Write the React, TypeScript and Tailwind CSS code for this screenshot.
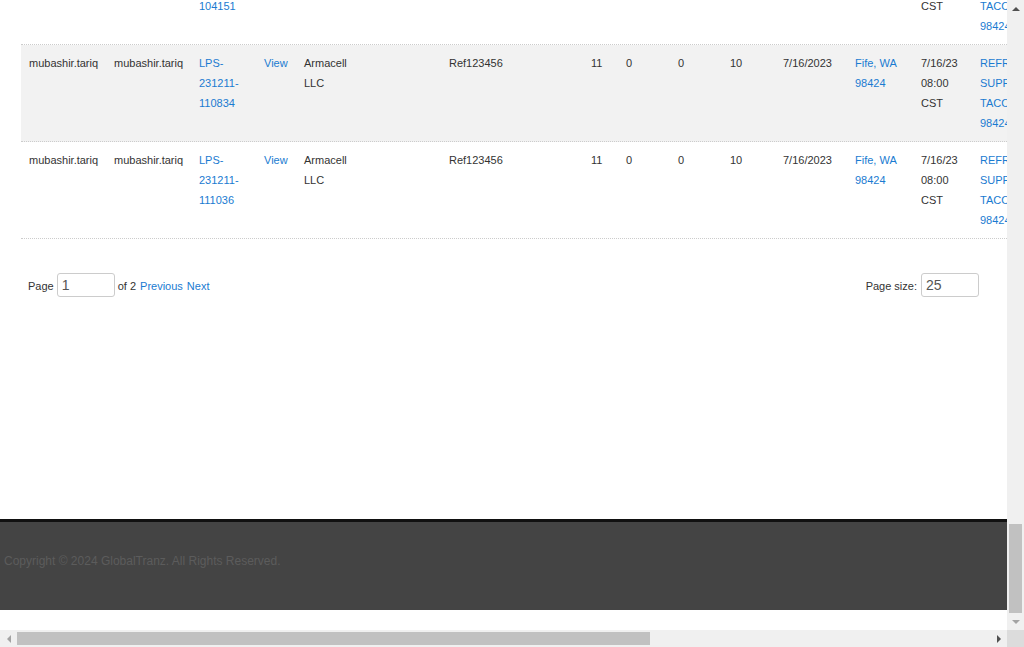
import React from 'react';

type Cell = { lines: string[]; link?: boolean };

const widths = [85, 85, 65, 40, 145, 142, 35, 52, 52, 53, 72, 66, 59, 90];

const makeRow = (id: string): Cell[] => [
  { lines: ['mubashir.tariq'] },
  { lines: ['mubashir.tariq'] },
  { lines: ['LPS-', '231211-', id], link: true },
  { lines: ['View'], link: true },
  { lines: ['Armacell', 'LLC'] },
  { lines: ['Ref123456'] },
  { lines: ['11'] },
  { lines: ['0'] },
  { lines: ['0'] },
  { lines: ['10'] },
  { lines: ['7/16/2023'] },
  { lines: ['Fife, WA', '98424'], link: true },
  { lines: ['7/16/23', '08:00', 'CST'] },
  { lines: ['REFRIGERATED', 'SUPPLY', 'TACOMA, WA', '98424'], link: true },
];

const Row = ({ cells, shaded }: { cells: Cell[]; shaded?: boolean }) => (
  <div
    className={`flex shrink-0 w-[1100px] border-b border-dotted border-[#cccccc] ${
      shaded ? 'bg-[#f2f2f2]' : 'bg-white'
    }`}
  >
    {cells.map((c, i) => (
      <div
        key={i}
        style={{ width: widths[i] }}
        className="shrink-0 px-2 pt-2 pb-2 min-h-[96px] overflow-hidden"
      >
        {c.lines.map((l, j) => (
          <div
            key={j}
            className={`h-5 leading-5 whitespace-nowrap ${c.link ? 'text-[#1a7bd1]' : 'text-[#333333]'}`}
          >
            {l}
          </div>
        ))}
      </div>
    ))}
  </div>
);

const Arrow = ({ dir, color }: { dir: 'up' | 'down' | 'left' | 'right'; color: string }) => {
  const pts = {
    up: '0,4 4,0 8,4',
    down: '0,0 8,0 4,4',
    left: '4,0 4,8 0,4',
    right: '0,0 4,4 0,8',
  }[dir];
  const horiz = dir === 'left' || dir === 'right';
  return (
    <svg width={horiz ? 4 : 8} height={horiz ? 8 : 4} viewBox={horiz ? '0 0 4 8' : '0 0 8 4'}>
      <polygon points={pts} fill={color} />
    </svg>
  );
};

export default function App() {
  return (
    <div className="w-[1024px] h-[647px] flex flex-col overflow-hidden bg-white font-['Liberation_Sans',Arial,sans-serif] text-[11px]">
      <div className="flex h-[630px]">
        <main className="w-[1007px] h-[630px] overflow-hidden flex flex-col">
          <div className="pl-[21px] flex flex-col">
            <div className="h-[45px] overflow-hidden flex flex-col justify-end">
              <Row cells={makeRow('104151')} />
            </div>
            <Row cells={makeRow('110834')} shaded />
            <Row cells={makeRow('111036')} />
          </div>

          <div className="h-[280px] shrink-0 pt-[34px] px-[28px] flex justify-between items-start text-[#333333]">
            <div className="flex items-center">
              <span className="pt-[2px]">Page</span>
              <div className="ml-[3px] w-[58px] h-6 border border-[#cccccc] rounded-[3px] pl-1 text-[14px] leading-[22px] text-[#555555]">
                1
              </div>
              <span className="ml-[3px] pt-[2px]">of 2</span>
              <a className="ml-1 pt-[2px] text-[#1a7bd1]">Previous</a>
              <a className="ml-1 pt-[2px] text-[#1a7bd1]">Next</a>
            </div>
            <div className="flex items-center">
              <span className="pt-[2px]">Page size:</span>
              <div className="ml-1 w-[58px] h-6 border border-[#cccccc] rounded-[3px] pl-1 text-[14px] leading-[22px] text-[#555555]">
                25
              </div>
            </div>
          </div>

          <footer className="shrink-0 border-t-[3px] border-[#111111] bg-[#444444] h-[91px] flex items-center pl-1 pb-[10px] text-[12px] text-[#5c5c5c]">
            Copyright © 2024 GlobalTranz. All Rights Reserved.
          </footer>
          <div className="h-5 shrink-0 bg-white" />
        </main>

        <div className="w-[17px] h-[630px] bg-[#f0f0f0] flex flex-col">
          <div className="h-[17px] flex items-center justify-center">
            <Arrow dir="up" color="#505050" />
          </div>
          <div className="flex-1" />
          <div className="h-[89px] mx-[2px] bg-[#c1c1c1]" />
          <div className="h-[17px] flex items-center justify-center">
            <Arrow dir="down" color="#a3a3a3" />
          </div>
        </div>
      </div>

      <div className="flex h-[17px]">
        <div className="w-[1007px] bg-[#f0f0f0] flex items-center">
          <div className="w-[17px] h-[17px] flex items-center justify-center">
            <Arrow dir="left" color="#a3a3a3" />
          </div>
          <div className="w-[633px] h-[13px] bg-[#c1c1c1]" />
          <div className="flex-1" />
          <div className="w-[17px] h-[17px] flex items-center justify-center">
            <Arrow dir="right" color="#505050" />
          </div>
        </div>
        <div className="w-[17px] bg-[#dcdcdc]" />
      </div>
    </div>
  );
}
